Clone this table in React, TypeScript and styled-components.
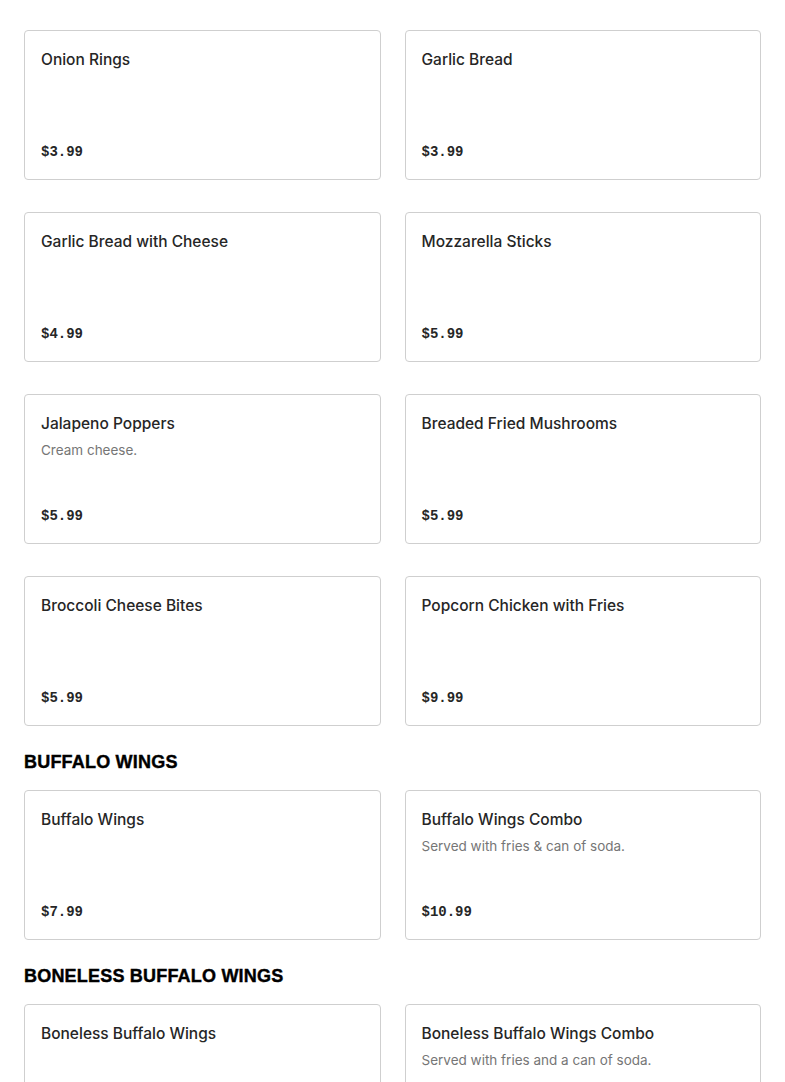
import styled, { createGlobalStyle } from 'styled-components'

type Item = {
  name: string
  price: string
  description?: string
}

type Section = {
  title?: string
  items: Item[]
}

const sections: Section[] = [
  {
    items: [
      { name: 'Onion Rings', price: '$3.99' },
      { name: 'Garlic Bread', price: '$3.99' },
      { name: 'Garlic Bread with Cheese', price: '$4.99' },
      { name: 'Mozzarella Sticks', price: '$5.99' },
      { name: 'Jalapeno Poppers', price: '$5.99', description: 'Cream cheese.' },
      { name: 'Breaded Fried Mushrooms', price: '$5.99' },
      { name: 'Broccoli Cheese Bites', price: '$5.99' },
      { name: 'Popcorn Chicken with Fries', price: '$9.99' },
    ],
  },
  {
    title: 'BUFFALO WINGS',
    items: [
      { name: 'Buffalo Wings', price: '$7.99' },
      { name: 'Buffalo Wings Combo', price: '$10.99', description: 'Served with fries & can of soda.' },
    ],
  },
  {
    title: 'BONELESS BUFFALO WINGS',
    items: [
      { name: 'Boneless Buffalo Wings', price: '$7.99' },
      { name: 'Boneless Buffalo Wings Combo', price: '$10.99', description: 'Served with fries and a can of soda.' },
    ],
  },
]

const GlobalStyle = createGlobalStyle`
  body {
    margin: 0;
    background: #fff;
    font-family: Inter, 'Liberation Sans', sans-serif;
    color: #222;
  }
`

const Page = styled.div`
  padding: 30px 24px 40px;
`

const SectionTitle = styled.h2`
  margin: 24px 0 16px;
  font-family: 'Liberation Sans', Arial, sans-serif;
  font-size: 18px;
  line-height: 24px;
  font-weight: 700;
  letter-spacing: 0.2px;
  -webkit-text-stroke: 0.4px #000;
  color: #000;
`

const Grid = styled.div`
  display: grid;
  grid-template-columns: 1fr 1fr;
  column-gap: 24px;
  row-gap: 32px;
`

const Card = styled.div`
  box-sizing: border-box;
  height: 150px;
  display: flex;
  flex-direction: column;
  padding: 17px 16px 16px;
  border: 1px solid #cfcfcf;
  border-radius: 4px;
  background: #fff;
`

const Name = styled.div`
  font-size: 15.5px;
  line-height: 24px;
  font-weight: 500;
  color: #262626;
`

const Description = styled.div`
  margin-top: 4px;
  font-size: 13.5px;
  line-height: 20px;
  color: #767676;
`

const Price = styled.div`
  margin-top: auto;
  font-family: 'Liberation Mono', 'DejaVu Sans Mono', monospace;
  font-size: 14px;
  line-height: 22px;
  font-weight: 700;
  color: #262626;
`

const MenuCard = ({ name, description, price }: Item) => (
  <Card>
    <Name>{name}</Name>
    {description && <Description>{description}</Description>}
    <Price>{price}</Price>
  </Card>
)

export default function App() {
  return (
    <>
      <GlobalStyle />
      <Page>
        {sections.map((section, i) => (
          <div key={i}>
            {section.title && <SectionTitle>{section.title}</SectionTitle>}
            <Grid>
              {section.items.map((item) => (
                <MenuCard key={item.name} {...item} />
              ))}
            </Grid>
          </div>
        ))}
      </Page>
    </>
  )
}
